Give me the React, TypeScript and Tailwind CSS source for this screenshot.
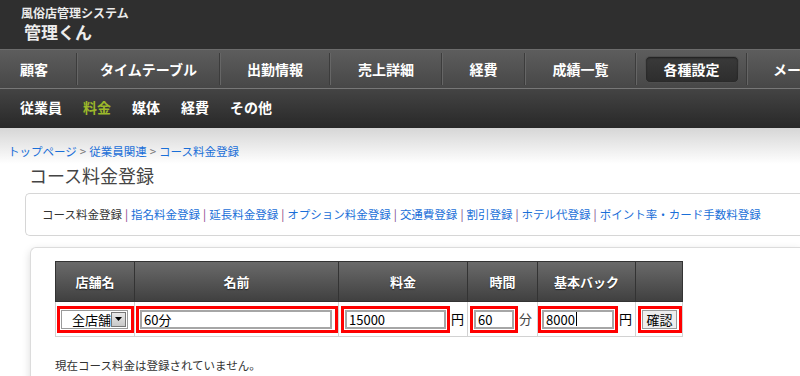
const mainNav = [
  { label: "顧客", width: "w-[76px]", first: true },
  { label: "タイムテーブル", width: "w-[141px]" },
  { label: "出勤情報", width: "w-[108px]" },
  { label: "売上詳細", width: "w-[110px]" },
  { label: "経費", width: "w-[81px]" },
  { label: "成績一覧", width: "w-[109px]" },
  { label: "各種設定", width: "w-[109px]", active: true },
  { label: "メール配信", width: "w-[120px]" },
];

const subNav = ["従業員", "料金", "媒体", "経費", "その他"];

const tabs = [
  "コース料金登録",
  "指名料金登録",
  "延長料金登録",
  "オプション料金登録",
  "交通費登録",
  "割引登録",
  "ホテル代登録",
  "ポイント率・カード手数料登録",
];

function Separator() {
  return (
    <div className="flex h-[32px] shrink-0">
      <div className="w-px bg-[#3c3c3c]" />
      <div className="w-px bg-[#666]" />
    </div>
  );
}

function RedBox({ children }: { children: React.ReactNode }) {
  return <div className="border-[3px] border-[#f00] bg-white p-px">{children}</div>;
}

function TextField({ value, width, caret }: { value: string; width: string; caret?: boolean }) {
  return (
    <RedBox>
      <div
        className={`flex h-[19px] items-center border-2 border-[#a6a6a6] bg-white pl-[2px] text-[13px] leading-none text-black ${width}`}
      >
        {value}
        {caret && <span className="ml-px h-[14px] w-px bg-black" />}
      </div>
    </RedBox>
  );
}

export default function App() {
  return (
    <div className="h-[376px] w-[800px] overflow-hidden bg-white font-['Noto_Sans_CJK_JP',sans-serif]">
      {/* header */}
      <div className="h-[49px] bg-[#2f2f2f] pl-[21px] text-[#ececec]">
        <div className="pt-[5px] text-[12px] font-bold leading-[16px]">風俗店管理システム</div>
        <div className="pl-[3px] text-[17px] font-bold leading-[22px]">管理くん</div>
      </div>

      {/* main nav */}
      <div className="flex h-[39px] items-center overflow-hidden border-t border-[#6c6c6c] bg-[linear-gradient(#5d5d5d,#474747)] text-[14px] font-bold text-white">
        {mainNav.map((item, i) => (
          <div key={item.label} className="flex shrink-0 items-center">
            {i > 0 && <Separator />}
            <div
              className={`flex h-[38px] shrink-0 items-center ${item.width} ${
                item.first ? "pl-[20px]" : "justify-center"
              } ${i === mainNav.length - 1 ? "justify-start pl-[25px]" : ""}`}
            >
              {item.active ? (
                <div className="flex h-[27px] w-[94px] items-center justify-center rounded-[5px] border border-[#4e4e4e] bg-[linear-gradient(#3a3a3a,#2d2d2d)] shadow-[inset_0_1px_2px_rgba(0,0,0,0.5)]">
                  {item.label}
                </div>
              ) : (
                <span className="whitespace-nowrap">{item.label}</span>
              )}
            </div>
          </div>
        ))}
      </div>

      {/* sub nav */}
      <div className="flex h-[40px] items-center gap-[21px] border-t border-[#777] bg-[linear-gradient(#444,#282828)] pb-[2px] pl-[20px] text-[14px] font-bold text-white">
        {subNav.map((s) => (
          <span key={s} className={s === "料金" ? "text-[#9cb82a]" : ""}>
            {s}
          </span>
        ))}
      </div>

      {/* content */}
      <div className="bg-[linear-gradient(#d6d6d6,#ffffff_36px)]">
        <div className="flex items-center gap-[3px] pl-[8px] pt-[16px] text-[11.5px] leading-[14px] text-[#1a6fd8]">
          <span>トップページ</span>
          <span className="text-[#777]">&gt;</span>
          <span>従業員関連</span>
          <span className="text-[#777]">&gt;</span>
          <span>コース料金登録</span>
        </div>

        <h1 className="mt-[5px] pl-[29px] text-[18px] font-normal leading-[24px] text-[#444]">
          コース料金登録
        </h1>

        <div className="ml-[25px] mt-[6px] flex h-[43px] items-center rounded-l-[5px] border border-r-0 border-[#d6d6d6] pl-[16px] text-[11.5px] whitespace-nowrap">
          {tabs.map((t, i) => (
            <span key={t} className="flex items-center">
              {i > 0 && <span className="mx-[3px] text-[#7d3f86]">|</span>}
              <span className={i === 0 ? "text-[#333]" : "text-[#1a6fd8]"}>{t}</span>
            </span>
          ))}
        </div>

        <div className="ml-[30px] mt-[11px] h-[200px] rounded-tl-[6px] border border-r-0 border-[#dcdcdc] pl-[24px] pt-[13px] shadow-[0_3px_8px_rgba(0,0,0,0.15)]">
          <table className="table-fixed border-collapse text-[13px]">
            <colgroup>
              <col className="w-[79px]" />
              <col className="w-[204px]" />
              <col className="w-[129px]" />
              <col className="w-[70px]" />
              <col className="w-[98px]" />
              <col className="w-[47px]" />
            </colgroup>
            <thead>
              <tr className="h-[40px] bg-[linear-gradient(#6a6a6a,#3f3f3f)] font-bold text-white">
                {["店舗名", "名前", "料金", "時間", "基本バック", ""].map((h, i) => (
                  <th key={i} className="border border-[#333] p-0 text-center font-bold [text-shadow:0_1px_1px_#222]">
                    {h}
                  </th>
                ))}
              </tr>
            </thead>
            <tbody>
              <tr className="h-[35px]">
                <td className="border border-[#d2d2d2] p-0 pl-px">
                  <RedBox>
                    <div className="flex h-[19px] w-[67px] items-center border border-[#9a9a9a] bg-white">
                      <span className="pl-[10px] text-[13px] leading-none text-black">全店舗</span>
                      <span className="ml-auto mr-px flex h-[15px] w-[15px] items-center justify-center border border-[#777] bg-[linear-gradient(#e8e8e8,#c8c8c8)]">
                        <svg width="7" height="4" viewBox="0 0 7 4">
                          <path d="M0 0h7L3.5 4z" fill="#000" />
                        </svg>
                      </span>
                    </div>
                  </RedBox>
                </td>
                <td className="border border-[#d2d2d2] p-0 pl-px">
                  <TextField value="60分" width="w-[192px]" />
                </td>
                <td className="border border-[#d2d2d2] p-0 pl-[2px]">
                  <div className="flex items-center gap-px">
                    <TextField value="15000" width="w-[101px]" />
                    <span className="text-[13px] text-black">円</span>
                  </div>
                </td>
                <td className="border border-[#d2d2d2] p-0 pl-[2px]">
                  <div className="flex items-center gap-px">
                    <TextField value="60" width="w-[40px]" />
                    <span className="text-[13px] text-[#444]">分</span>
                  </div>
                </td>
                <td className="border border-[#d2d2d2] p-0">
                  <div className="flex items-center gap-px">
                    <TextField value="8000" width="w-[72px]" caret />
                    <span className="text-[13px] text-black">円</span>
                  </div>
                </td>
                <td className="border border-[#d2d2d2] p-0 pl-[2px]">
                  <RedBox>
                    <div className="flex h-[19px] w-[35px] items-center justify-center border border-[#9a9a9a] bg-[#eee] text-[13px] leading-none text-black">
                      確認
                    </div>
                  </RedBox>
                </td>
              </tr>
            </tbody>
          </table>
          <p className="mt-[21px] text-[11.5px] leading-[14px] text-[#333]">
            現在コース料金は登録されていません。
          </p>
        </div>
      </div>
    </div>
  );
}
